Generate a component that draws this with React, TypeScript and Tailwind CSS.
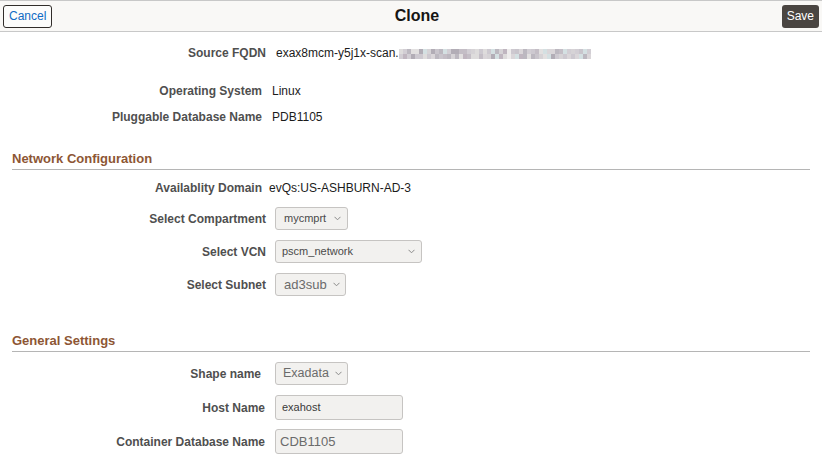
import React from "react";

const palette = [
  "#d6d3d6", "#c9c5cc", "#dedcdc", "#bcb8c0", "#d2ced4", "#e2e0e0",
  "#c4bec6", "#d4e0e2", "#b2adb6", "#dad6d9", "#cdc9d0", "#c0b6c0",
];

function seeded(n: number) {
  let s = n * 9301 + 49297;
  const out: string[] = [];
  for (let i = 0; i < 120; i++) {
    s = (s * 9301 + 49297) % 233280;
    out.push(palette[Math.floor((s / 233280) * palette.length)]);
  }
  return out;
}

function Blur({ count, seed }: { count: number; seed: number }) {
  const c = seeded(seed);
  return (
    <div className="flex flex-col">
      {[0, 1].map((r) => (
        <div key={r} className="flex">
          {Array.from({ length: count }).map((_, i) => (
            <div
              key={i}
              className="w-[4px] h-[5px]"
              style={{ backgroundColor: c[(i * 2 + r * 7) % c.length] }}
            />
          ))}
        </div>
      ))}
    </div>
  );
}

function Chevron() {
  return (
    <svg width="7" height="5" viewBox="0 0 7 5" className="shrink-0">
      <polyline points="0.5,0.8 3.5,3.8 6.5,0.8" fill="none" stroke="#8a8a8a" strokeWidth="1" />
    </svg>
  );
}

function Label({ w, children }: { w: string; children: React.ReactNode }) {
  return (
    <div className={`${w} shrink-0 text-right text-[12px] font-bold text-[#4f4f4f] leading-[20px]`}>
      {children}
    </div>
  );
}

function SectionHeader({ title, mt }: { title: string; mt: string }) {
  return (
    <div className={`${mt} mx-[12px] pb-[2px] border-b border-[#b5b5b5]`}>
      <div className="text-[13px] font-bold text-[#8d5634] leading-[16px]">{title}</div>
    </div>
  );
}

export default function App() {
  return (
    <div className="w-[822px] h-[472px] overflow-hidden bg-white font-['Liberation_Sans',Arial,sans-serif]">
      {/* Header */}
      <div className="flex items-center h-[32px] border-y border-[#c8c8c8] bg-[#f9f8f6] px-[3px]">
        <div className="h-[23px] px-[5px] flex items-center border border-[#312d2a] rounded-[3px] bg-[#fcfcfb] text-[12px] text-[#0f6bc4]">
          Cancel
        </div>
        <div className="flex-1 text-center text-[16px] font-bold text-[#161513]">Clone</div>
        <div className="h-[23px] px-[5px] flex items-center rounded-[3px] bg-[#4a4541] text-[12px] text-white">
          Save
        </div>
      </div>

      {/* Source FQDN */}
      <div className="flex items-center mt-[11px] h-[20px]">
        <Label w="w-[266px]">Source FQDN</Label>
        <div className="ml-[10px] flex items-center text-[12px] text-[#1b1b1b]">
          <span>exax8mcm-y5j1x-scan.</span>
          <div className="flex items-center mt-[2px]">
            <Blur count={27} seed={3} />
            <div className="w-[4px] h-[10px] bg-[#eeecec]" />
            <Blur count={20} seed={11} />
          </div>
        </div>
      </div>

      <div className="flex items-center mt-[18px] h-[20px]">
        <Label w="w-[262px]">Operating System</Label>
        <div className="ml-[10px] text-[12px] text-[#1b1b1b]">Linux</div>
      </div>

      <div className="flex items-center mt-[6px] h-[20px]">
        <Label w="w-[262px]">Pluggable Database Name</Label>
        <div className="ml-[10px] text-[12px] text-[#1b1b1b]">PDB1105</div>
      </div>

      <SectionHeader title="Network Configuration" mt="mt-[24px]" />

      <div className="flex items-center mt-[8px] h-[20px]">
        <Label w="w-[262px]">Availablity Domain</Label>
        <div className="ml-[7px] text-[12px] text-[#1b1b1b]">evQs:US-ASHBURN-AD-3</div>
      </div>

      <div className="flex items-center mt-[9px] h-[23px]">
        <Label w="w-[266px]">Select Compartment</Label>
        <div className="ml-[9px] w-[73px] h-[23px] flex items-center justify-between pl-[8px] pr-[6px] border border-[#c6c4c2] rounded-[3px] bg-[#f2f1ef] text-[11px] text-[#4a4a4a]">
          <span>mycmprt</span>
          <Chevron />
        </div>
      </div>

      <div className="flex items-center mt-[10px] h-[23px]">
        <Label w="w-[266px]">Select VCN</Label>
        <div className="ml-[9px] w-[147px] h-[23px] flex items-center justify-between pl-[6px] pr-[6px] border border-[#c6c4c2] rounded-[3px] bg-[#f2f1ef] text-[11px] text-[#4a4a4a]">
          <span>pscm_network</span>
          <Chevron />
        </div>
      </div>

      <div className="flex items-center mt-[10px] h-[23px]">
        <Label w="w-[266px]">Select Subnet</Label>
        <div className="ml-[9px] w-[71px] h-[23px] flex items-center justify-between pl-[8px] pr-[5px] border border-[#c6c4c2] rounded-[3px] bg-[#f2f1ef] text-[13px] text-[#6b6b6b]">
          <span>ad3sub</span>
          <Chevron />
        </div>
      </div>

      <SectionHeader title="General Settings" mt="mt-[37px]" />

      <div className="flex items-center mt-[10px] h-[23px]">
        <Label w="w-[261px]">Shape name</Label>
        <div className="ml-[14px] w-[73px] h-[23px] flex items-center justify-between pl-[7px] pr-[5px] border border-[#c6c4c2] rounded-[3px] bg-[#f2f1ef] text-[12.5px] text-[#6b6b6b]">
          <span>Exadata</span>
          <Chevron />
        </div>
      </div>

      <div className="flex items-center mt-[10px] h-[25px]">
        <Label w="w-[265px]">Host Name</Label>
        <div className="ml-[10px] w-[128px] h-[25px] flex items-center pl-[6px] border border-[#c6c4c2] rounded-[3px] bg-[#f2f1ef] text-[11px] text-[#3a3a3a]">
          exahost
        </div>
      </div>

      <div className="flex items-center mt-[9px] h-[25px]">
        <Label w="w-[265px]">Container Database Name</Label>
        <div className="ml-[10px] w-[128px] h-[25px] flex items-center pl-[4px] border border-[#c6c4c2] rounded-[3px] bg-[#f2f1ef] text-[13px] text-[#6b6b6b]">
          CDB1105
        </div>
      </div>
    </div>
  );
}
